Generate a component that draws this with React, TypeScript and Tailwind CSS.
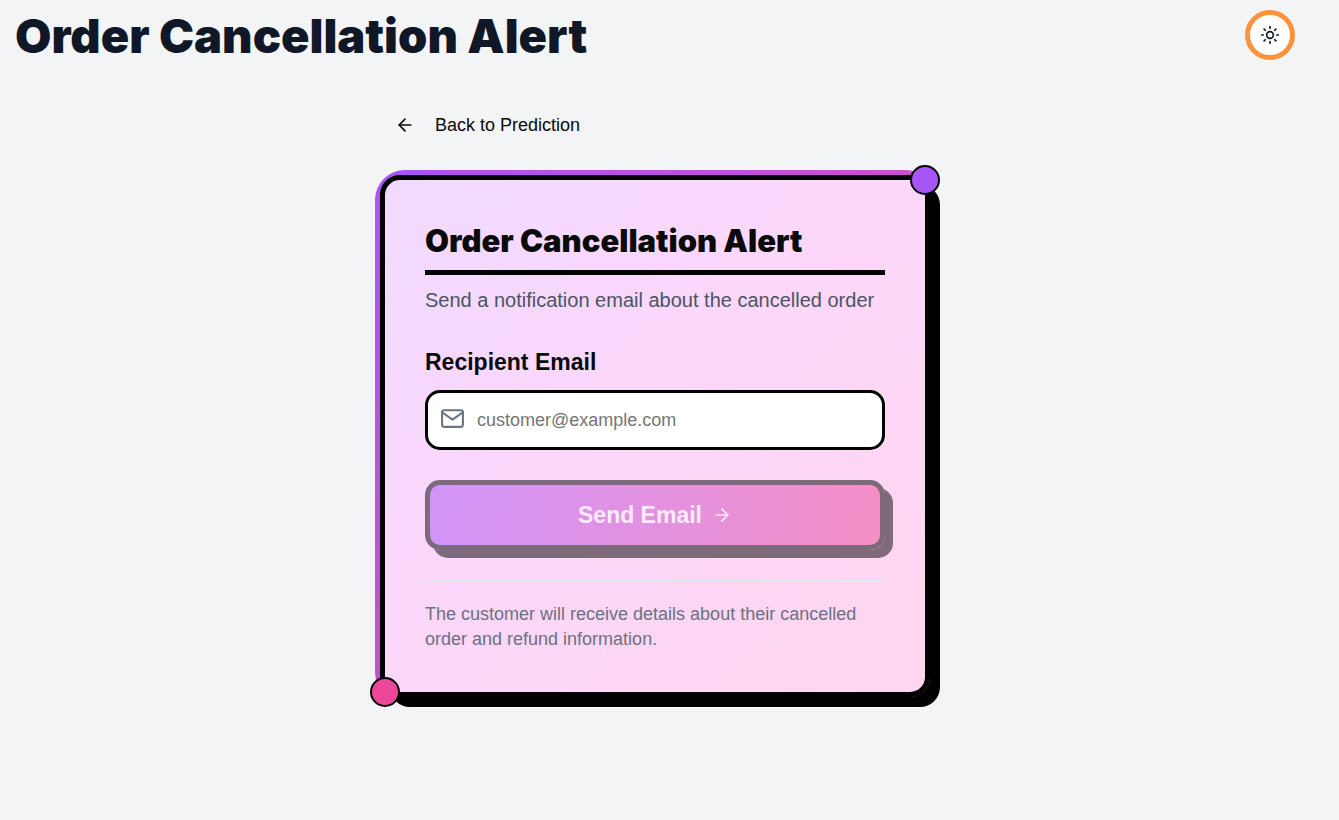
import { ArrowLeft, ArrowRight, Sun } from "lucide-react";
import { useState } from "react";
import { FiMail } from "react-icons/fi";

function Header() {
  return (
    <header className="flex items-center justify-between px-[15px] py-[10px]">
      <h1 className="pt-[2px] font-['Inter',sans-serif] text-[47px] leading-[48px] font-black text-gray-900">
        Order Cancellation Alert
      </h1>
      <button
        type="button"
        aria-label="Toggle theme"
        className="flex size-[50px] items-center justify-center rounded-full border-5 border-[#fb923c] bg-white text-gray-900"
      >
        <Sun size={20} />
      </button>
    </header>
  );
}

function AlertCard() {
  const [email, setEmail] = useState("");

  return (
    <div className="relative isolate before:absolute before:-inset-[5px] before:-z-10 before:rounded-[30px] before:bg-linear-to-br/srgb before:from-[#a855f7] before:to-[#ec4899]">
      <section className="relative rounded-[20px] border-5 border-black bg-linear-to-br/srgb from-[#f1daff] via-[#fbd7fc] via-40% to-[#ffd6ee] p-10 shadow-[10px_10px_0_#000]">
        <span className="absolute -top-[15px] -right-[15px] size-[30px] rounded-full border-2 border-black bg-[#a855f7]" />
        <span className="absolute -bottom-[15px] -left-[15px] size-[30px] rounded-full border-2 border-black bg-[#ec4899]" />

        <h2 className="border-b-5 border-black pt-px pb-[10px] font-['Inter',sans-serif] text-[31px] leading-[39px] font-black text-neutral-950">
          Order Cancellation Alert
        </h2>
        <p className="mt-[10px] text-[20px] leading-[30px] text-[#4b5563]">
          Send a notification email about the cancelled order
        </p>

        <form onSubmit={(event) => event.preventDefault()} className="mt-[30px]">
          <label htmlFor="email" className="block text-[23px] leading-[35px] font-bold text-neutral-950">
            Recipient Email
          </label>
          <div className="mt-[10px] flex h-[60px] items-center gap-3 rounded-[15px] border-3 border-black bg-white px-3">
            <FiMail size={25} className="mb-1 shrink-0 text-[#6b7280]" />
            <input
              id="email"
              type="email"
              value={email}
              onChange={(event) => setEmail(event.target.value)}
              placeholder="customer@example.com"
              className="min-w-0 flex-1 bg-transparent text-[18px] leading-[25px] text-neutral-950 outline-none placeholder:text-[#757575]"
            />
          </div>
          <button
            type="submit"
            disabled={email === ""}
            className="mt-[30px] flex h-[70px] w-full items-center justify-center gap-[10px] rounded-[15px] border-5 border-black bg-linear-to-r/srgb from-[#a855f7] to-[#ec4899] bg-origin-border text-[23px] leading-[35px] font-bold text-white shadow-[8px_8px_0_#000] disabled:opacity-50"
          >
            Send Email
            <ArrowRight size={20} />
          </button>
        </form>

        <p className="mt-[30px] border-t-2 border-gray-200 pt-5 text-[18px] leading-[25px] text-[#6b7280]">
          The customer will receive details about their cancelled order and refund information.
        </p>
      </section>
    </div>
  );
}

export default function App() {
  return (
    <div className="min-h-screen bg-gray-100 pr-[29px] font-['Liberation_Sans',Arial,sans-serif]">
      <Header />
      <main className="mx-auto mt-[30px] max-w-[550px]">
        <a href="#prediction" className="ml-[15px] inline-flex h-[50px] items-center gap-5 text-[18px] text-neutral-950">
          <ArrowLeft size={20} />
          Back to Prediction
        </a>
        <div className="mt-[25px]">
          <AlertCard />
        </div>
      </main>
    </div>
  );
}
